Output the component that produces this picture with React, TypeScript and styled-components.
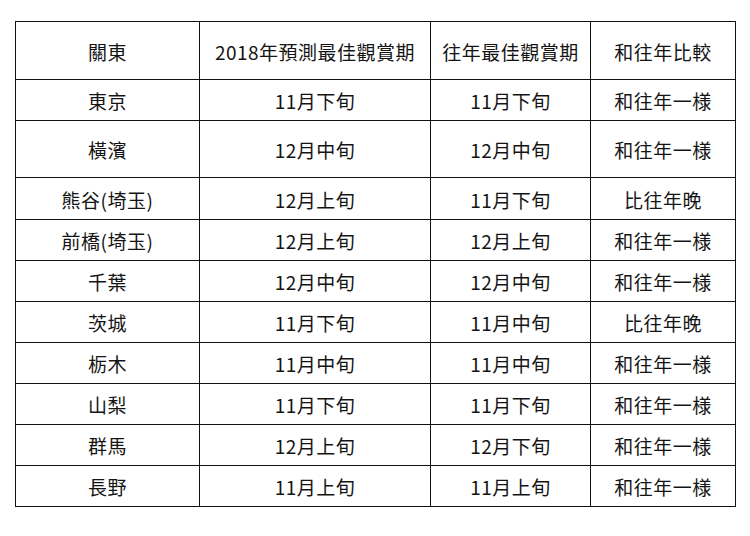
import React from "react";
import styled, { createGlobalStyle } from "styled-components";

const GlobalStyle = createGlobalStyle`
  html, body {
    margin: 0;
    padding: 0;
    background: #ffffff;
  }
  body {
    font-family: "Noto Sans CJK TC", "Noto Sans CJK JP", sans-serif;
    color: #141414;
  }
`;

const headers = ["關東", "2018年預測最佳觀賞期", "往年最佳觀賞期", "和往年比較"];

const rows: string[][] = [
  ["東京", "11月下旬", "11月下旬", "和往年一様"],
  ["橫濱", "12月中旬", "12月中旬", "和往年一様"],
  ["熊谷(埼玉)", "12月上旬", "11月下旬", "比往年晚"],
  ["前橋(埼玉)", "12月上旬", "12月上旬", "和往年一様"],
  ["千葉", "12月中旬", "12月中旬", "和往年一様"],
  ["茨城", "11月下旬", "11月中旬", "比往年晚"],
  ["栃木", "11月中旬", "11月中旬", "和往年一様"],
  ["山梨", "11月下旬", "11月下旬", "和往年一様"],
  ["群馬", "12月上旬", "12月下旬", "和往年一様"],
  ["長野", "11月上旬", "11月上旬", "和往年一様"],
];

// header, then one height per data row
const rowHeights = [58, 41, 57, 42, 41, 41, 41, 41, 41, 41, 41];

const App: React.FC = () => {
  return (
    <>
      <GlobalStyle />
      <Page>
        <Table $rows={rowHeights}>
          {headers.map((h) => (
            <Cell key={h}>{h}</Cell>
          ))}
          {rows.map((row) =>
            row.map((text, i) => <Cell key={row[0] + i}>{text}</Cell>)
          )}
        </Table>
      </Page>
    </>
  );
};

const Page = styled.div`
  width: 750px;
  height: 536px;
  padding: 21px 0 0 15px;
  box-sizing: border-box;
`;

const Table = styled.div<{ $rows: number[] }>`
  display: grid;
  grid-template-columns: 184px 231px 160px 145px;
  grid-template-rows: ${(p) => p.$rows.map((h) => `${h}px`).join(" ")};
  width: fit-content;
  border-top: 1px solid #111;
  border-left: 1px solid #111;
`;

const Cell = styled.div`
  display: flex;
  align-items: center;
  justify-content: center;
  box-sizing: border-box;
  border-right: 1px solid #111;
  border-bottom: 1px solid #111;
  font-size: 19px;
  line-height: 1;
  letter-spacing: 0.5px;
  padding-top: 1px;
  white-space: nowrap;
`;

export default App;
